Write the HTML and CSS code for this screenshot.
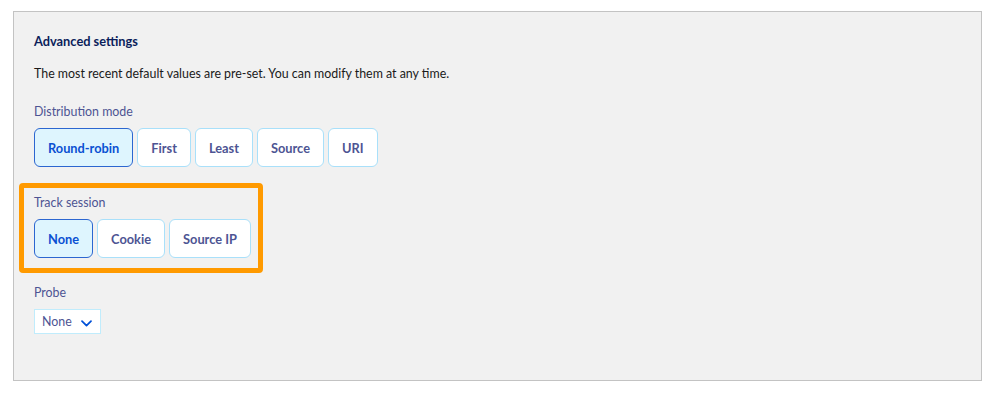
FILE: index.html
```html
<!DOCTYPE html>
<html lang="en">
<head>
<meta charset="utf-8">
<title>Advanced settings</title>
<link rel="stylesheet" href="styles.css">
</head>
<body>
<section class="panel">
  <h2 class="panel-title">Advanced settings</h2>
  <p class="panel-desc">The most recent default values are pre-set. You can modify them at any time.</p>

  <div class="field">
    <div class="field-label">Distribution mode</div>
    <div class="tiles">
      <button class="tile tile-active">Round-robin</button>
      <button class="tile">First</button>
      <button class="tile">Least</button>
      <button class="tile">Source</button>
      <button class="tile">URI</button>
    </div>
  </div>

  <div class="highlight">
    <div class="field-label">Track session</div>
    <div class="tiles">
      <button class="tile tile-active">None</button>
      <button class="tile">Cookie</button>
      <button class="tile">Source IP</button>
    </div>
  </div>

  <div class="field field-probe">
    <div class="field-label">Probe</div>
    <div class="select">
      <span class="select-value">None</span>
      <svg class="select-chevron" width="11" height="7" viewBox="0 0 11 7" aria-hidden="true">
        <path d="M1 1.2 L5.5 5.7 L10 1.2" fill="none" stroke="#0050d7" stroke-width="1.7" stroke-linecap="round" stroke-linejoin="round"/>
      </svg>
    </div>
  </div>
</section>
</body>
</html>
```

FILE: styles.css
```css
html, body {
  margin: 0;
  padding: 0;
  background: #ffffff;
}

body {
  font-family: "Source Sans Pro", Lato, "Noto Sans", sans-serif;
  color: #1a1a1a;
}

.panel {
  margin: 11px 7px 0 13px;
  height: 370px;
  box-sizing: border-box;
  background: #f1f1f1;
  border: 1px solid #c3c3c3;
  padding: 0 0 0 20px;
}

.panel-title {
  margin: 0;
  padding-top: 21px;
  font-size: 12.8px;
  line-height: 16px;
  font-weight: 700;
  color: #0b1e5b;
}

.panel-desc {
  margin: 16px 0 0;
  font-size: 12.4px;
  line-height: 18px;
  color: #1a1a1a;
}

.field {
  margin-top: 20px;
}

.field-label {
  font-size: 12.4px;
  line-height: 18px;
  color: #4d5493;
}

.tiles {
  display: flex;
  gap: 4px;
  margin-top: 7px;
}

.tile {
  height: 39px;
  padding: 0 13px;
  background: #ffffff;
  border: 1px solid #a9e0fa;
  border-radius: 6px;
  font-family: inherit;
  font-size: 12.8px;
  font-weight: 700;
  color: #4d5493;
  white-space: nowrap;
  cursor: pointer;
}

.tile-active {
  background: #def5fe;
  border-color: #2c66d0;
  color: #0a50d2;
}

.highlight {
  margin: 16px 0 0 -15px;
  width: 244px;
  box-sizing: border-box;
  border: 5px solid #ff9a00;
  border-radius: 4px;
  padding: 6px 10px 10px 10px;
}

.field-probe {
  margin-top: 11px;
}

.select {
  display: flex;
  align-items: center;
  justify-content: space-between;
  margin-top: 7px;
  width: 67px;
  height: 25px;
  box-sizing: border-box;
  background: #ffffff;
  border: 1px solid #c0ecfc;
  padding: 0 8px 0 7px;
}

.select-value {
  font-size: 12.4px;
  color: #4d5493;
}

.select-chevron {
  display: block;
  margin-top: 3px;
}
```
